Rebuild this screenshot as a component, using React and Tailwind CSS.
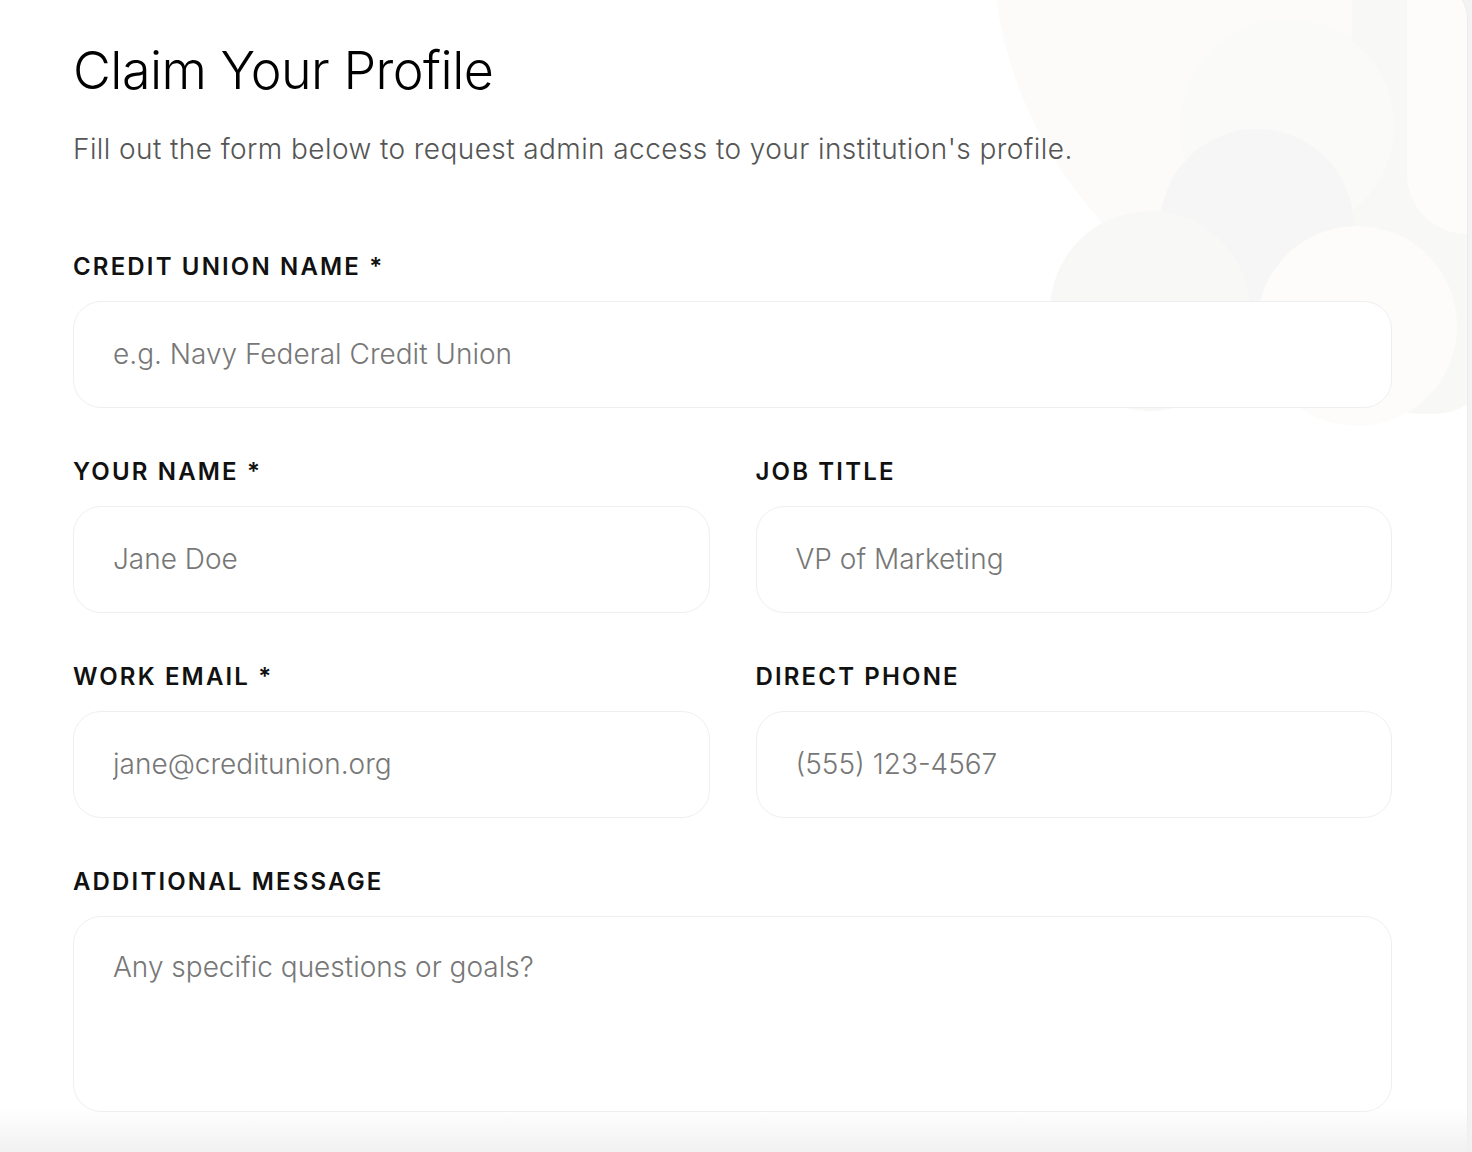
import React from 'react';

const labelCls = 'text-[24px] font-semibold uppercase tracking-[0.09em] text-[#111] leading-none';

const Field = ({ label, placeholder, className = '' }) => (
    <div className={`flex flex-col ${className}`}>
        <label className={labelCls}>{label}</label>
        <input
            type="text"
            placeholder={placeholder}
            className="mt-[22px] h-[107px] w-full rounded-[28px] border border-[#efefef] bg-white px-[39px] text-[28px] font-light text-[#222] placeholder:text-[#777] outline-none"
        />
    </div>
);

const Decor = () => (
    <svg className="pointer-events-none absolute right-0 top-0" width="480" height="450" viewBox="0 0 480 450" fill="none">
        {/* big faint arc */}
        <circle cx="420" cy="-40" r="415" fill="#fcfbfa" />
        {/* tall rounded pill on the right */}
        <rect x="365" y="-60" width="150" height="493" rx="70" fill="#f8f8f7" />
        <rect x="420" y="-60" width="120" height="313" rx="60" fill="#fdfcfb" />
        {/* circles */}
        <circle cx="300" cy="145" r="107" fill="#fafaf9" />
        <circle cx="270" cy="245" r="97" fill="#f6f6f6" />
        <circle cx="163" cy="330" r="100" fill="#f8f8f7" />
        <circle cx="370" cy="345" r="100" fill="#fdfcfb" />
    </svg>
);

export default function App() {
    return (
        <div className="relative h-[1152px] overflow-hidden bg-[#f3f3f3]" style={{ fontFamily: 'Inter, "Open Sans", sans-serif' }}>
            <div className="relative ml-[-8px] mt-[-20px] h-[1200px] w-[1476px] overflow-hidden rounded-[40px] border border-[#ececec] bg-white">
                <Decor />
                <div className="relative pl-[80px] pr-[75px] pt-[59px]">
                    <h1 className="text-[52px] font-light leading-[1.2] tracking-[-0.01em] text-black">
                        Claim Your Profile
                    </h1>
                    <p className="mt-[29px] text-[28px] font-light leading-[1.3] tracking-[0.015em] text-[#555]">
                        Fill out the form below to request admin access to your institution's profile.
                    </p>

                    <div className="mt-[87px] flex flex-col gap-[52px]">
                        <Field label="Credit Union Name *" placeholder="e.g. Navy Federal Credit Union" />
                        <div className="grid grid-cols-2 gap-x-[46px]">
                            <Field label="Your Name *" placeholder="Jane Doe" />
                            <Field label="Job Title" placeholder="VP of Marketing" />
                        </div>
                        <div className="grid grid-cols-2 gap-x-[46px]">
                            <Field label="Work Email *" placeholder="jane@creditunion.org" />
                            <Field label="Direct Phone" placeholder="(555) 123-4567" />
                        </div>
                        <div className="flex flex-col">
                            <label className={labelCls}>Additional Message</label>
                            <textarea
                                placeholder="Any specific questions or goals?"
                                className="mt-[22px] h-[196px] w-full resize-none rounded-[28px] border border-[#efefef] bg-white px-[39px] py-[34px] text-[28px] font-light leading-[1.2] text-[#222] placeholder:text-[#777] outline-none"
                            />
                        </div>
                    </div>
                </div>
            </div>
            <div className="pointer-events-none absolute bottom-0 left-0 h-[44px] w-full bg-gradient-to-b from-white/0 to-[#f1f1f1]" />
        </div>
    );
}
